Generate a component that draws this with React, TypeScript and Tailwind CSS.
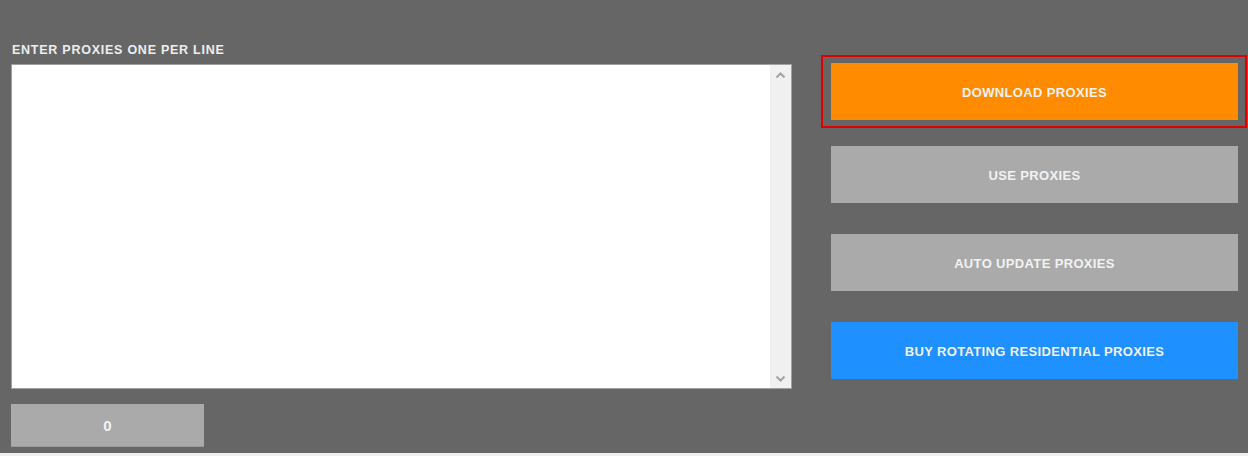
import { useState } from "react";

const ScrollArrow = ({ up }: { up?: boolean }) => (
  <div className="h-[17px] flex items-center justify-center">
    <svg width="9" height="6" viewBox="0 0 9 6">
      <path
        d={up ? "M0.5 5.5 L4.5 1.5 L8.5 5.5" : "M0.5 0.5 L4.5 4.5 L8.5 0.5"}
        fill="none"
        stroke="#a3a3a3"
        strokeWidth="2"
      />
    </svg>
  </div>
);

const ActionButton = ({ label, color }: { label: string; color: string }) => (
  <button
    className={`w-[407px] h-[57px] flex items-center justify-center pt-[2px] text-[13px] font-bold text-[#f2f2f2] tracking-[0.35px] ${color}`}
  >
    {label}
  </button>
);

const App = () => {
  const [proxies, setproxies] = useState("");
  const count = proxies.split("\n").filter((l) => l.trim() !== "").length;

  return (
    <div className="w-[1248px] h-[456px] bg-[#eeeeee] font-['Liberation_Sans',Arial,sans-serif]">
      <div className="h-[453px] bg-[#666666] flex pl-[11px] pt-[40px]">
        <div className="w-[781px] flex flex-col">
          <label className="h-[24px] pt-[1px] text-[12.5px] font-bold text-[#eeeeee] tracking-[0.75px] pl-[1px]">
            ENTER PROXIES ONE PER LINE
          </label>
          <div className="h-[325px] flex bg-white border border-[#a0a0a0]">
            <textarea
              value={proxies}
              onChange={(e) => setproxies(e.target.value)}
              className="flex-1 resize-none outline-none text-sm p-1"
            />
            <div className="w-[21px] bg-[#f0f0f0] flex flex-col justify-between py-[1px]">
              <ScrollArrow up />
              <ScrollArrow />
            </div>
          </div>
          <div className="mt-[15px] w-[193px] h-[43px] pt-[2px] bg-[#aaaaaa] border-b border-[#999999] flex items-center justify-center text-[15px] font-bold text-[#f2f2f2]">
            {count}
          </div>
        </div>

        <div className="ml-[29px] pt-[15px] flex flex-col">
          <div className="w-[426px] h-[73px] border-2 border-[#e00000] pl-[8px] pt-[6px]">
            <ActionButton label="DOWNLOAD PROXIES" color="bg-[#ff8c00]" />
          </div>
          <div className="pl-[10px] mt-[18px] flex flex-col gap-[31px]">
            <ActionButton label="USE PROXIES" color="bg-[#aaaaaa]" />
            <ActionButton label="AUTO UPDATE PROXIES" color="bg-[#aaaaaa]" />
            <ActionButton label="BUY ROTATING RESIDENTIAL PROXIES" color="bg-[#1e90ff]" />
          </div>
        </div>
      </div>
    </div>
  );
};

export default App;
